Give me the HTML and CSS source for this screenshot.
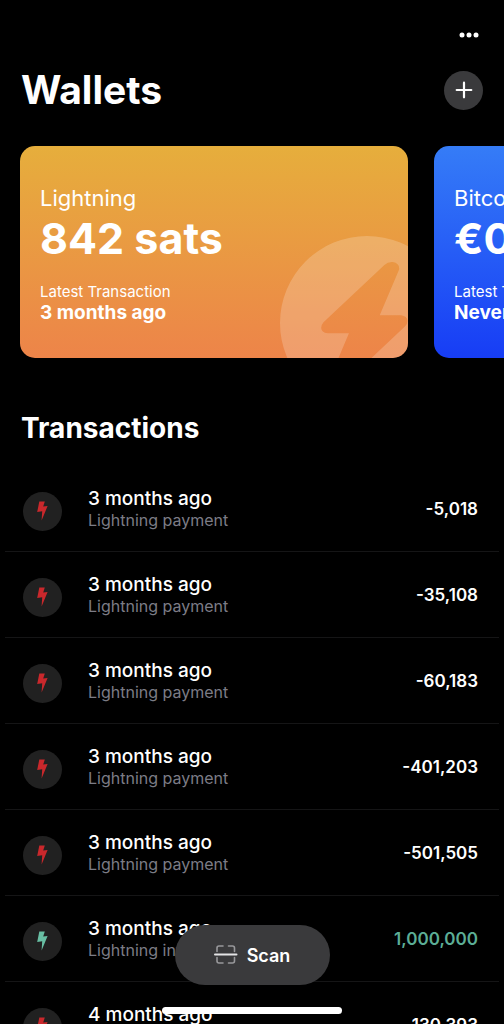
FILE: index.html
```
<!DOCTYPE html>
<html lang="en">
<head>
<meta charset="utf-8">
<meta name="viewport" content="width=device-width, initial-scale=1">
<title>Wallets</title>
<link rel="stylesheet" href="styles.css">
</head>
<body>
<svg class="symbols" aria-hidden="true">
  <symbol id="bolt" viewBox="0 0 12 20"><path d="M2.3 .4H7.8L6.2 5.6L10.6 5L4.6 19.6L5.2 10.2L.2 11Z"/></symbol>
</svg>
<div class="app">
  <nav class="toolbar">
    <button class="more" type="button" aria-label="More">
      <svg width="20" height="6" viewBox="0 0 20 6" fill="currentColor"><circle cx="3" cy="3" r="2.5"/><circle cx="10" cy="3" r="2.5"/><circle cx="17" cy="3" r="2.5"/></svg>
    </button>
  </nav>
  <header class="header">
    <h1 class="title">Wallets</h1>
    <button class="add" type="button" aria-label="Add wallet">
      <svg width="18" height="18" viewBox="0 0 18 18" fill="none" stroke="currentColor" stroke-width="2.2" stroke-linecap="round"><path d="M9 1.7V16.3M1.7 9H16.3"/></svg>
    </button>
  </header>
  <section class="carousel" aria-label="Wallets">
    <a class="card lightning" href="#lightning">
      <svg class="card-art" viewBox="0 0 520 520" aria-hidden="true"><path fill="#fff" fill-opacity=".2" fill-rule="evenodd" d="M260 0A260 260 0 1 1 260 520A260 260 0 1 1 260 0ZM312 87Q322 77 337 78Q358 82 356 100L298 237H362Q380 240 381 253Q381 262 374 270L192 441Q182 451 167 450Q146 446 148 428L206 291H142Q124 288 123 275Q123 266 130 258Z"/></svg>
      <span class="card-name">Lightning</span>
      <strong class="card-balance">842 sats</strong>
      <span class="card-label">Latest Transaction</span>
      <strong class="card-time">3 months ago</strong>
    </a>
    <a class="card bitcoin" href="#bitcoin">
      <span class="card-name">Bitcoin</span>
      <strong class="card-balance">€0</strong>
      <span class="card-label">Latest Transaction</span>
      <strong class="card-time">Never</strong>
    </a>
  </section>
  <main class="transactions">
    <h2 class="subtitle">Transactions</h2>
    <ul class="list">
      <li class="row"><span class="badge"><svg class="bolt"><use href="#bolt"/></svg></span><div class="info"><span class="when">3 months ago</span><span class="memo">Lightning payment</span></div><span class="amount">-5,018</span></li>
      <li class="row"><span class="badge"><svg class="bolt"><use href="#bolt"/></svg></span><div class="info"><span class="when">3 months ago</span><span class="memo">Lightning payment</span></div><span class="amount">-35,108</span></li>
      <li class="row"><span class="badge"><svg class="bolt"><use href="#bolt"/></svg></span><div class="info"><span class="when">3 months ago</span><span class="memo">Lightning payment</span></div><span class="amount">-60,183</span></li>
      <li class="row"><span class="badge"><svg class="bolt"><use href="#bolt"/></svg></span><div class="info"><span class="when">3 months ago</span><span class="memo">Lightning payment</span></div><span class="amount">-401,203</span></li>
      <li class="row"><span class="badge"><svg class="bolt"><use href="#bolt"/></svg></span><div class="info"><span class="when">3 months ago</span><span class="memo">Lightning payment</span></div><span class="amount">-501,505</span></li>
      <li class="row received"><span class="badge"><svg class="bolt"><use href="#bolt"/></svg></span><div class="info"><span class="when">3 months ago</span><span class="memo">Lightning invoice</span></div><span class="amount">1,000,000</span></li>
      <li class="row"><span class="badge"><svg class="bolt"><use href="#bolt"/></svg></span><div class="info"><span class="when">4 months ago</span><span class="memo">Lightning payment</span></div><span class="amount">-130,393</span></li>
    </ul>
  </main>
  <div class="dock">
    <button class="scan" type="button">
      <svg width="24" height="20" viewBox="0 0 24 20" fill="none" aria-hidden="true"><path stroke="#98989b" stroke-width="1.6" stroke-linecap="round" stroke-linejoin="round" d="M3 6.5V3Q3 1 5 1H9M14.5 1H18.5Q20.5 1 20.5 3V6.5M3 12.5V16Q3 18 5 18H9M14.5 18H18.5Q20.5 18 20.5 16V12.5"/><path stroke="#e4e4e6" stroke-width="2" stroke-linecap="round" d="M1 9.5H22.5"/></svg>
      Scan
    </button>
    <div class="home-indicator"></div>
  </div>
</div>
</body>
</html>
```
FILE: styles.css
```
* { box-sizing: border-box; margin: 0; padding: 0; }
body { background: #000; color: #fff; font-family: Inter, "Liberation Sans", sans-serif; }
button { border: 0; background: none; color: inherit; font: inherit; cursor: pointer; }
a { color: inherit; text-decoration: none; }
.symbols { position: absolute; width: 0; height: 0; }
.app { position: relative; height: 100vh; overflow: hidden; }

.toolbar { display: flex; justify-content: flex-end; padding: 24px 21px 0; }
.more { display: flex; align-items: center; justify-content: center; width: 28px; height: 22px; }
.header { display: flex; align-items: center; justify-content: space-between; padding: 20px 21px 0; }
.title { font-size: 39px; line-height: 48px; font-weight: 700; }
.add { display: flex; align-items: center; justify-content: center; width: 39px; height: 39px; border-radius: 50%; background: #3a3a3c; }

.carousel { display: flex; gap: 26px; padding: 32px 22px 0 20px; overflow: hidden; }
.card { position: relative; flex: 0 0 84%; display: flex; flex-direction: column; padding: 38px 20px 34px; border-radius: 15px; overflow: hidden; white-space: nowrap; }
.lightning { background: linear-gradient(#e6ae3c, #ed8449); }
.bitcoin { background: linear-gradient(#357cf7, #173df5); }
.card-art { position: absolute; right: -46px; bottom: -52px; width: 174px; height: 174px; }
.card-name { font-size: 22px; line-height: 28px; font-weight: 400; }
.card-balance { font-size: 43px; line-height: 52px; font-weight: 700; }
.card-label { margin-top: 18px; font-size: 15px; line-height: 20px; font-weight: 400; }
.card-time { font-size: 19px; line-height: 22px; font-weight: 700; }

.subtitle { padding: 52px 21px 20px; font-size: 28px; line-height: 36px; font-weight: 700; }
.list { list-style: none; padding: 0 5px; }
.row { display: flex; align-items: center; height: 86px; padding: 0 21px 0 18px; border-bottom: 1px solid #151516; }
.badge { display: flex; align-items: center; justify-content: center; width: 39px; height: 39px; margin-top: 5px; border-radius: 50%; background: #212121; color: #c9282c; }
.bolt { width: 12px; height: 20px; fill: currentColor; }
.info { display: flex; flex: 1; flex-direction: column; margin-left: 26px; }
.when { font-size: 19px; line-height: 22px; font-weight: 500; }
.memo { font-size: 16px; line-height: 20px; color: #7c7c86; }
.amount { font-size: 17px; line-height: 22px; font-weight: 600; }
.received .badge { color: #68bfa4; }
.received .amount { color: #5cae96; }

.dock { position: absolute; inset: auto 0 0; display: flex; flex-direction: column; align-items: center; gap: 22px; padding-bottom: 10px; }
.scan { display: flex; align-items: center; justify-content: center; gap: 9px; width: 155px; height: 60px; border-radius: 30px; background: #3a3a3c; font-size: 18px; font-weight: 600; }
.home-indicator { width: 180px; height: 7px; border-radius: 4px; background: #fff; }
```
